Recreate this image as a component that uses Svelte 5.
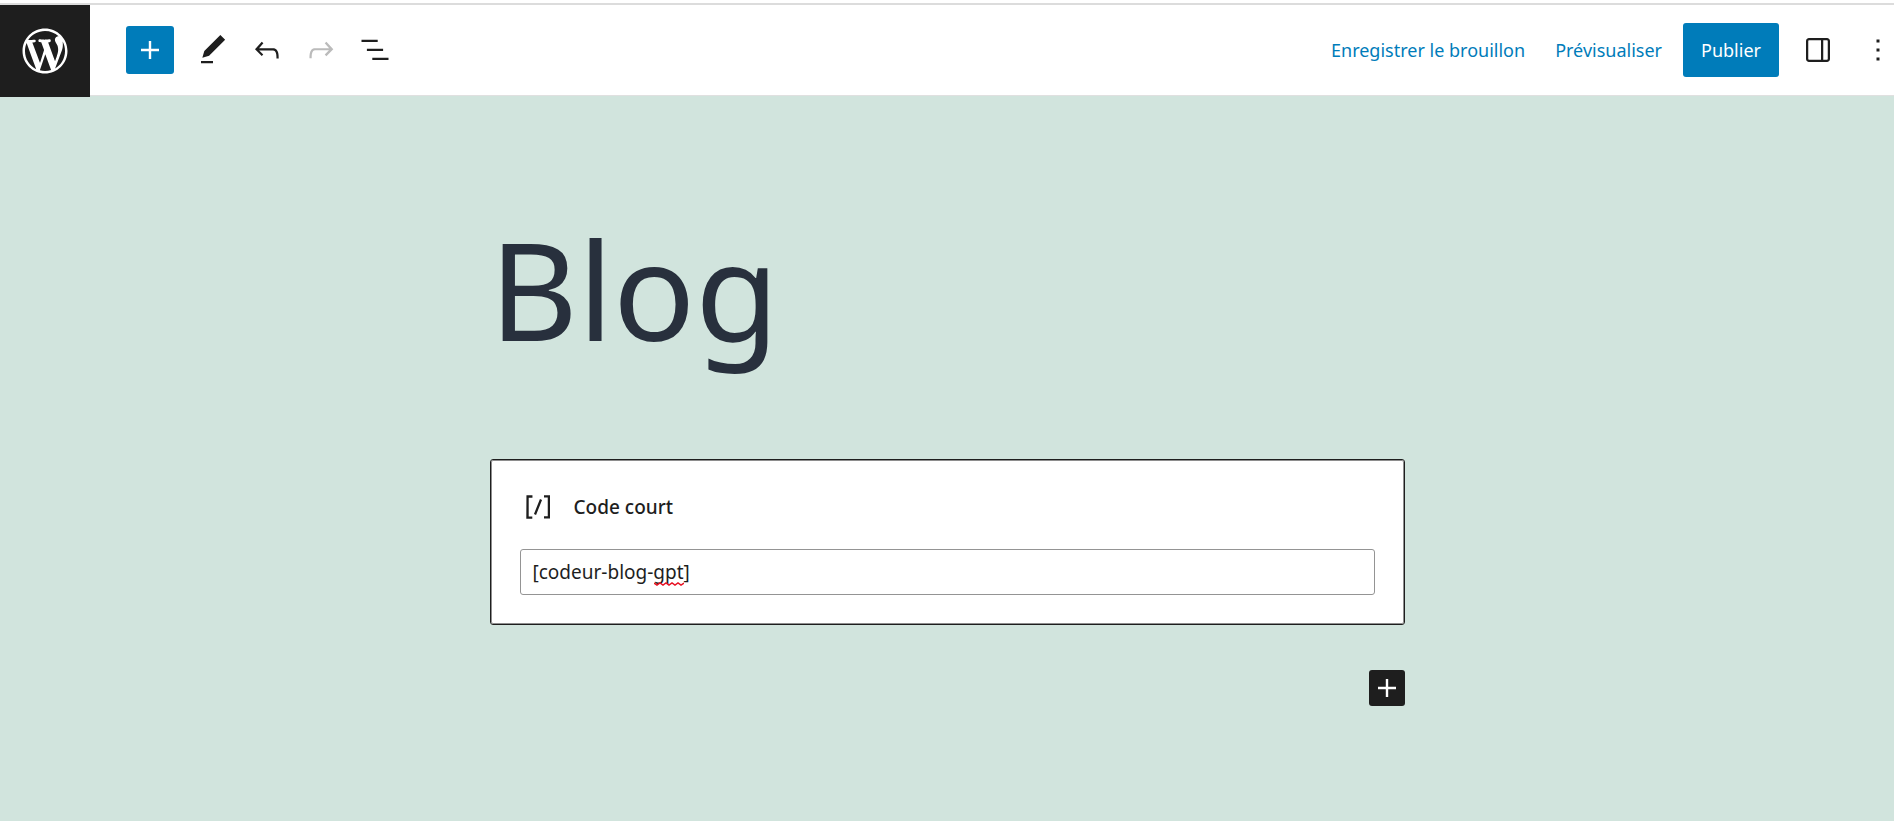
<script lang="ts">
  // Block editor: top toolbar plus the canvas with one shortcode block.
  const icons = {
    plus: 'M18 11.2h-5.2V6h-1.6v5.2H6v1.6h5.2V18h1.6v-5.2H18z',
    edit: 'M20.1 5.1L16.9 2 6.2 12.7l-1.3 4.4 4.5-1.2L20.1 5.1zM4 20.8h8v-1.5H4v1.5z',
    undo: 'M18.3 11.7c-.6-.6-1.4-.9-2.3-.9H6.7l2.9-3.3-1.1-1-4.5 5L8.5 16l1-1-2.7-2.7H16c.5 0 .9.2 1.3.5 1 1 1 3.4 1 4.5v.3h1.5v-.2c0-1.5 0-4.3-1.5-5.7z',
    redo: 'M15.6 6.5l-1.1 1 2.9 3.3H8c-.9 0-1.7.3-2.3.9-1.4 1.5-1.4 4.2-1.4 5.6v.2h1.5v-.3c0-1.1 0-3.5 1-4.5.3-.3.7-.5 1.3-.5h9.2L14.5 15l1.1 1.1 4.6-4.6-4.6-5z',
    listView: 'M13.8 5.2H3v1.5h10.8V5.2zm-3.6 12v1.5H21v-1.5H10.2zm7.2-6H6.6v1.5h10.8v-1.5z',
    sidebar:
      'M18 4H6c-1.1 0-2 .9-2 2v12c0 1.1.9 2 2 2h12c1.1 0 2-.9 2-2V6c0-1.1-.9-2-2-2zm-4 14.5H6c-.3 0-.5-.2-.5-.5V6c0-.3.2-.5.5-.5h8v13zm4.5-.5c0 .3-.2.5-.5.5h-2.5v-13H18c.3 0 .5.2.5.5v12z',
    more: 'M13 19h-2v-2h2v2zm0-6h-2v-2h2v2zm0-6h-2V5h2v2z',
    shortcode:
      'M16 4.2v1.5h2.5v12.5H16v1.5h4V4.2h-4zM4.2 19.8h4v-1.5H5.8V5.8h2.5V4.2h-4l-.1 15.6zm5.1-3.1l1.4.6 4-10-1.4-.6-4 10z',
  };

  const tools = [
    { icon: icons.edit, label: 'Outils', disabled: false },
    { icon: icons.undo, label: 'Annuler', disabled: false },
    { icon: icons.redo, label: 'Rétablir', disabled: true },
    { icon: icons.listView, label: 'Vue en liste', disabled: false },
  ];

  let shortcode = $state('[codeur-blog-gpt]');
</script>

{#snippet icon(path: string)}
  <svg class="icon" viewBox="0 0 24 24" aria-hidden="true"><path d={path} /></svg>
{/snippet}

<div class="editor">
  <header class="header">
    <a class="logo" href="#dashboard" aria-label="Voir les pages">
      <svg viewBox="-2 -2 24 24" aria-hidden="true">
        <path
          d="M20 10c0-5.51-4.49-10-10-10C4.48 0 0 4.49 0 10c0 5.52 4.48 10 10 10 5.51 0 10-4.48 10-10zM7.78 15.37L4.37 6.22c.55-.02 1.17-.08 1.17-.08.5-.06.44-1.13-.06-1.11 0 0-1.45.11-2.37.11-.18 0-.37 0-.58-.01C4.12 2.69 6.87 1.11 10 1.11c2.33 0 4.45.87 6.05 2.34-.68-.11-1.65.39-1.65 1.58 0 .74.45 1.36.9 2.1.35.61.55 1.36.55 2.46 0 1.49-1.4 5-1.4 5l-3.03-8.37c.54-.02.82-.17.82-.17.5-.05.44-1.25-.06-1.22 0 0-1.44.12-2.38.12-.87 0-2.33-.12-2.33-.12-.5-.03-.56 1.2-.06 1.22l.92.08 1.26 3.41zM17.41 10c.24-.64.74-1.87.43-4.25.7 1.29 1.05 2.71 1.05 4.25 0 3.29-1.73 6.24-4.4 7.78.97-2.59 1.94-5.2 2.92-7.78zM6.1 18.09C3.12 16.65 1.11 13.53 1.11 10c0-1.3.23-2.48.72-3.59C3.25 10.3 4.67 14.2 6.1 18.09zm4.03-6.63l2.58 6.98c-.86.29-1.76.45-2.71.45-.79 0-1.57-.11-2.29-.33.81-2.38 1.62-4.74 2.42-7.1z"
        />
      </svg>
    </a>

    <div class="tools" role="toolbar" aria-label="Outils du document">
      <button class="inserter" aria-label="Ajouter un bloc">{@render icon(icons.plus)}</button>
      {#each tools as tool (tool.label)}
        <button class="tool" aria-label={tool.label} disabled={tool.disabled}>
          {@render icon(tool.icon)}
        </button>
      {/each}
    </div>

    <div class="settings">
      <button class="link">Enregistrer le brouillon</button>
      <button class="link">Prévisualiser</button>
      <button class="publish">Publier</button>
      <div class="panels">
        <button class="tool" aria-label="Réglages">{@render icon(icons.sidebar)}</button>
        <button class="tool" aria-label="Options">{@render icon(icons.more)}</button>
      </div>
    </div>
  </header>

  <main class="canvas">
    <h1>Blog</h1>

    <section class="block">
      <label for="shortcode">
        {@render icon(icons.shortcode)}
        Code court
      </label>
      <div class="field">
        <input id="shortcode" type="text" spellcheck="false" bind:value={shortcode} />
        <!-- spelling mark under the last word -->
        <svg class="squiggle" viewBox="0 0 30 4" aria-hidden="true">
          <path d="M0 1l3 2 3-2 3 2 3-2 3 2 3-2 3 2 3-2 3 2 3-2" />
        </svg>
      </div>
    </section>

    <button class="append" aria-label="Ajouter un bloc">{@render icon(icons.plus)}</button>
  </main>
</div>

<style>
  :global(body) {
    background: #d1e4dd;
  }

  .editor {
    min-height: 100vh;
    box-sizing: border-box;
    padding-top: 3px;
    overflow: hidden;
    background: linear-gradient(#fff 3px, #d1e4dd 3px);
    font-family: 'Segoe UI', 'Noto Sans', sans-serif;
    font-size: 18px;
    color: #1e1e1e;
  }

  button {
    display: flex;
    align-items: center;
    justify-content: center;
    padding: 0;
    border: 0;
    border-radius: 3px;
    background: none;
    font: inherit;
    color: inherit;
    cursor: pointer;
  }

  .icon {
    flex: none;
    width: 36px;
    height: 36px;
    fill: currentColor;
  }

  .header {
    display: flex;
    align-items: center;
    height: 90px;
    border-top: 2px solid #dcdcdc;
    border-bottom: 1px solid #e0e0e0;
    background: #fff;
  }

  .logo {
    align-self: flex-start;
    display: flex;
    align-items: center;
    justify-content: center;
    width: 90px;
    height: 92px;
    background: #1e1e1e;
  }

  .logo svg {
    width: 54px;
    height: 54px;
    fill: #fff;
  }

  .tools {
    display: flex;
    align-items: center;
    margin-left: 36px;
  }

  .inserter {
    width: 48px;
    height: 48px;
    margin-right: 12px;
    background: #007cba;
    color: #fff;
  }

  .tool {
    width: 54px;
    height: 54px;
  }

  .tool:disabled {
    color: #bbb;
    cursor: default;
  }

  .settings {
    display: flex;
    align-items: center;
    gap: 12px;
    margin-left: auto;
    /* the options button runs past the window edge */
    margin-right: -11px;
  }

  .link {
    height: 54px;
    padding: 0 9px;
    color: #007cba;
    white-space: nowrap;
  }

  .publish {
    height: 54px;
    padding: 0 18px;
    background: #007cba;
    color: #fff;
  }

  .panels {
    display: flex;
    gap: 6px;
  }

  .canvas {
    display: flex;
    flex-direction: column;
    max-width: 915px;
    margin: 0 auto;
    padding: 105px 0;
  }

  h1 {
    margin: 0 0 82px;
    font-size: 136px;
    font-weight: 400;
    line-height: 176px;
    color: #28303d;
  }

  .block {
    padding: 29px;
    border: 1px solid #1e1e1e;
    border-radius: 3px;
    outline: 1px solid #8e8e8e;
    outline-offset: -2px;
    background: #fff;
  }

  label {
    display: flex;
    align-items: center;
    gap: 18px;
    margin-bottom: 24px;
    font-size: 19px;
    font-weight: 500;
  }

  .field {
    position: relative;
  }

  input {
    display: block;
    box-sizing: border-box;
    width: 100%;
    height: 46px;
    padding: 0 12px;
    border: 1px solid #949494;
    border-radius: 3px;
    background: #fff;
    font: inherit;
    font-size: 19px;
    color: #1e1e1e;
  }

  .squiggle {
    position: absolute;
    left: 134px;
    top: 33px;
    width: 30px;
    height: 4px;
    fill: none;
    stroke: #e81123;
    stroke-width: 1.5;
    pointer-events: none;
  }

  .append {
    align-self: flex-end;
    width: 36px;
    height: 36px;
    margin-top: 45px;
    background: #1e1e1e;
    color: #fff;
  }
</style>
